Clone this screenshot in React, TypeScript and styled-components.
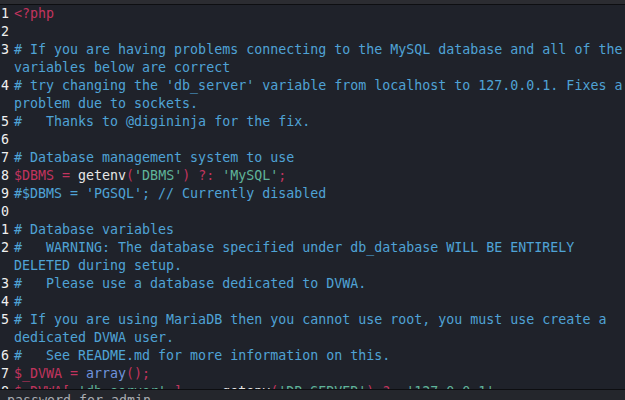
import React from "react";
import styled, { createGlobalStyle } from "styled-components";

const Global = createGlobalStyle`
  html, body { margin: 0; padding: 0; background: #1f222a; }
  body { overflow: hidden; }
`;

const C = {
  comment: "#4fa3d6",
  pink: "#c2345e",
  green: "#5fb49a",
  white: "#e6e6e6",
  fn: "#6f93dc",
};

const Window = styled.div`
  width: 625px;
  height: 400px;
  display: flex;
  flex-direction: column;
  overflow: hidden;
  background: #1f222a;
  font-family: "DejaVu Sans Mono", "Liberation Mono", monospace;
  font-size: 13.3px;
  line-height: 18px;
`;

const TopStrip = styled.div`
  height: 4px;
  flex: none;
  background: #2b2c31;
  border-bottom: 1px solid #0d0e11;
`;

const Editor = styled.div`
  flex: 1;
  min-height: 0;
  overflow: hidden;
`;

const Line = styled.div`
  display: grid;
  grid-template-columns: 14px 1fr;
`;

const LineNo = styled.span`
  color: #f0f0f0;
  padding-left: 1px;
`;

const Code = styled.span`
  white-space: pre-wrap;
  color: ${C.white};
`;

const Tok = styled.span<{ $c: string }>`
  color: ${(p) => p.$c};
`;

const StatusBar = styled.div`
  height: 10px;
  flex: none;
  box-sizing: content-box;
  background: #24262c;
  border-top: 1px solid #0d0e11;
  overflow: hidden;
  color: #a9acb2;
  padding-left: 7px;
  line-height: 14px;
  white-space: pre;
`;

const StatusText = styled.div`
  margin-top: 4px;
`;

type T = [string, string];
const lines: { n: string; toks: T[] }[] = [
  { n: "1", toks: [["<?php", C.pink]] },
  { n: "2", toks: [] },
  {
    n: "3",
    toks: [
      [
        "# If you are having problems connecting to the MySQL database and all of the variables below are correct",
        C.comment,
      ],
    ],
  },
  {
    n: "4",
    toks: [
      [
        "# try changing the 'db_server' variable from localhost to 127.0.0.1. Fixes a problem due to sockets.",
        C.comment,
      ],
    ],
  },
  { n: "5", toks: [["#   Thanks to @digininja for the fix.", C.comment]] },
  { n: "6", toks: [] },
  { n: "7", toks: [["# Database management system to use", C.comment]] },
  {
    n: "8",
    toks: [
      ["$DBMS = ", C.pink],
      ["getenv", C.white],
      ["(", C.pink],
      ["'DBMS'", C.green],
      [") ?: ", C.pink],
      ["'MySQL'", C.green],
      [";", C.pink],
    ],
  },
  { n: "9", toks: [["#$DBMS = 'PGSQL'; // Currently disabled", C.comment]] },
  { n: "0", toks: [] },
  { n: "1", toks: [["# Database variables", C.comment]] },
  {
    n: "2",
    toks: [
      [
        "#   WARNING: The database specified under db_database WILL BE ENTIRELY DELETED during setup.",
        C.comment,
      ],
    ],
  },
  { n: "3", toks: [["#   Please use a database dedicated to DVWA.", C.comment]] },
  { n: "4", toks: [["#", C.comment]] },
  {
    n: "5",
    toks: [
      [
        "# If you are using MariaDB then you cannot use root, you must use create a dedicated DVWA user.",
        C.comment,
      ],
    ],
  },
  { n: "6", toks: [["#   See README.md for more information on this.", C.comment]] },
  {
    n: "7",
    toks: [
      ["$_DVWA = ", C.pink],
      ["array", C.fn],
      ["();", C.pink],
    ],
  },
  {
    n: "8",
    toks: [
      ["$_DVWA[ ", C.pink],
      ["'db_server'", C.green],
      [" ]   = ", C.pink],
      ["getenv", C.white],
      ["(", C.pink],
      ["'DB_SERVER'", C.green],
      [") ?: ", C.pink],
      ["'127.0.0.1'", C.green],
      [";", C.pink],
    ],
  },
];

export default function App() {
  return (
    <>
      <Global />
      <Window>
        <TopStrip />
        <Editor>
          {lines.map((l, i) => (
            <Line key={i}>
              <LineNo>{l.n}</LineNo>
              <Code>
                {l.toks.length === 0
                  ? " "
                  : l.toks.map(([t, c], j) => (
                      <Tok key={j} $c={c}>
                        {t}
                      </Tok>
                    ))}
              </Code>
            </Line>
          ))}
        </Editor>
        <StatusBar>
          <StatusText>password for admin</StatusText>
        </StatusBar>
      </Window>
    </>
  );
}
